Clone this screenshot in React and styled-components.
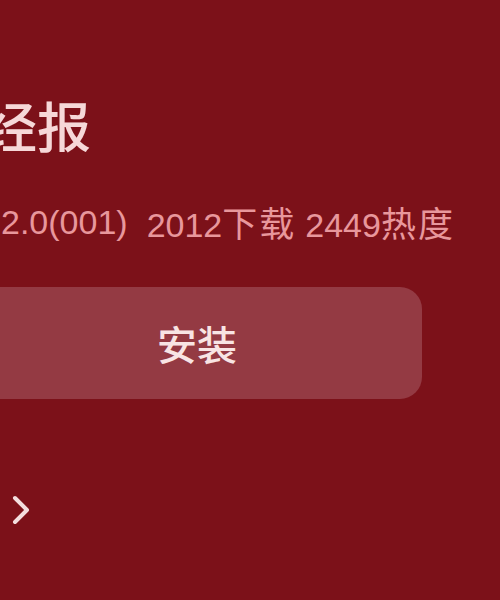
import React from "react";
import styled, { createGlobalStyle } from "styled-components";

const Global = createGlobalStyle`
  html, body { margin: 0; padding: 0; background: #7c1119; }
  body { font-family: "Liberation Sans", "Noto Sans CJK SC", sans-serif; }
`;

const Page = styled.div`
  width: 500px;
  height: 600px;
  overflow: hidden;
  background: #7c1119;
  display: flex;
  flex-direction: column;
  padding-top: 94px;
  box-sizing: border-box;
`;

const Title = styled.h1`
  margin: 0 0 0 -17px;
  font-family: "Noto Sans CJK SC", sans-serif;
  font-size: 54px;
  line-height: 62px;
  font-weight: 500;
  color: #f6d8d8;
  white-space: nowrap;
`;

const Meta = styled.div`
  margin: 46px 0 0 1px;
  display: flex;
  gap: 9px;
  font-size: 34px;
  line-height: 40px;
  color: #e8979c;
  white-space: nowrap;
`;

const MetaItem = styled.span`
  font-family: "Liberation Sans", "Noto Sans CJK SC", sans-serif;
  margin-right: ${(p) => (p.$wide ? "10px" : "0")};
`;

const Unit = styled.span`
  font-family: "Noto Sans CJK SC", sans-serif;
  font-size: 35px;
  letter-spacing: 2px;
`;

const InstallButton = styled.button`
  margin: 42px 0 0 -28px;
  width: 450px;
  height: 112px;
  border: none;
  border-radius: 22px;
  background: #943a43;
  color: #f8e4e4;
  font-family: "Noto Sans CJK SC", sans-serif;
  font-size: 40px;
  font-weight: 500;
  display: flex;
  align-items: center;
  justify-content: center;
  padding: 0;
`;

const MoreRow = styled.div`
  margin: 94px 0 0 11px;
  display: flex;
  align-items: center;
`;

const Chevron = () => (
  <svg width="20" height="34" viewBox="0 0 20 34" fill="none">
    <polyline
      points="4,5 16,17 4,29"
      stroke="#f4dede"
      strokeWidth="4"
      strokeLinecap="round"
      strokeLinejoin="round"
    />
  </svg>
);

export default function App() {
  return (
    <>
      <Global />
      <Page>
        <Title>经报</Title>
        <Meta>
          <MetaItem $wide>2.0(001)</MetaItem>
          <MetaItem>
            2012<Unit>下载</Unit>
          </MetaItem>
          <MetaItem>
            2449<Unit>热度</Unit>
          </MetaItem>
        </Meta>
        <InstallButton>安装</InstallButton>
        <MoreRow>
          <Chevron />
        </MoreRow>
      </Page>
    </>
  );
}
